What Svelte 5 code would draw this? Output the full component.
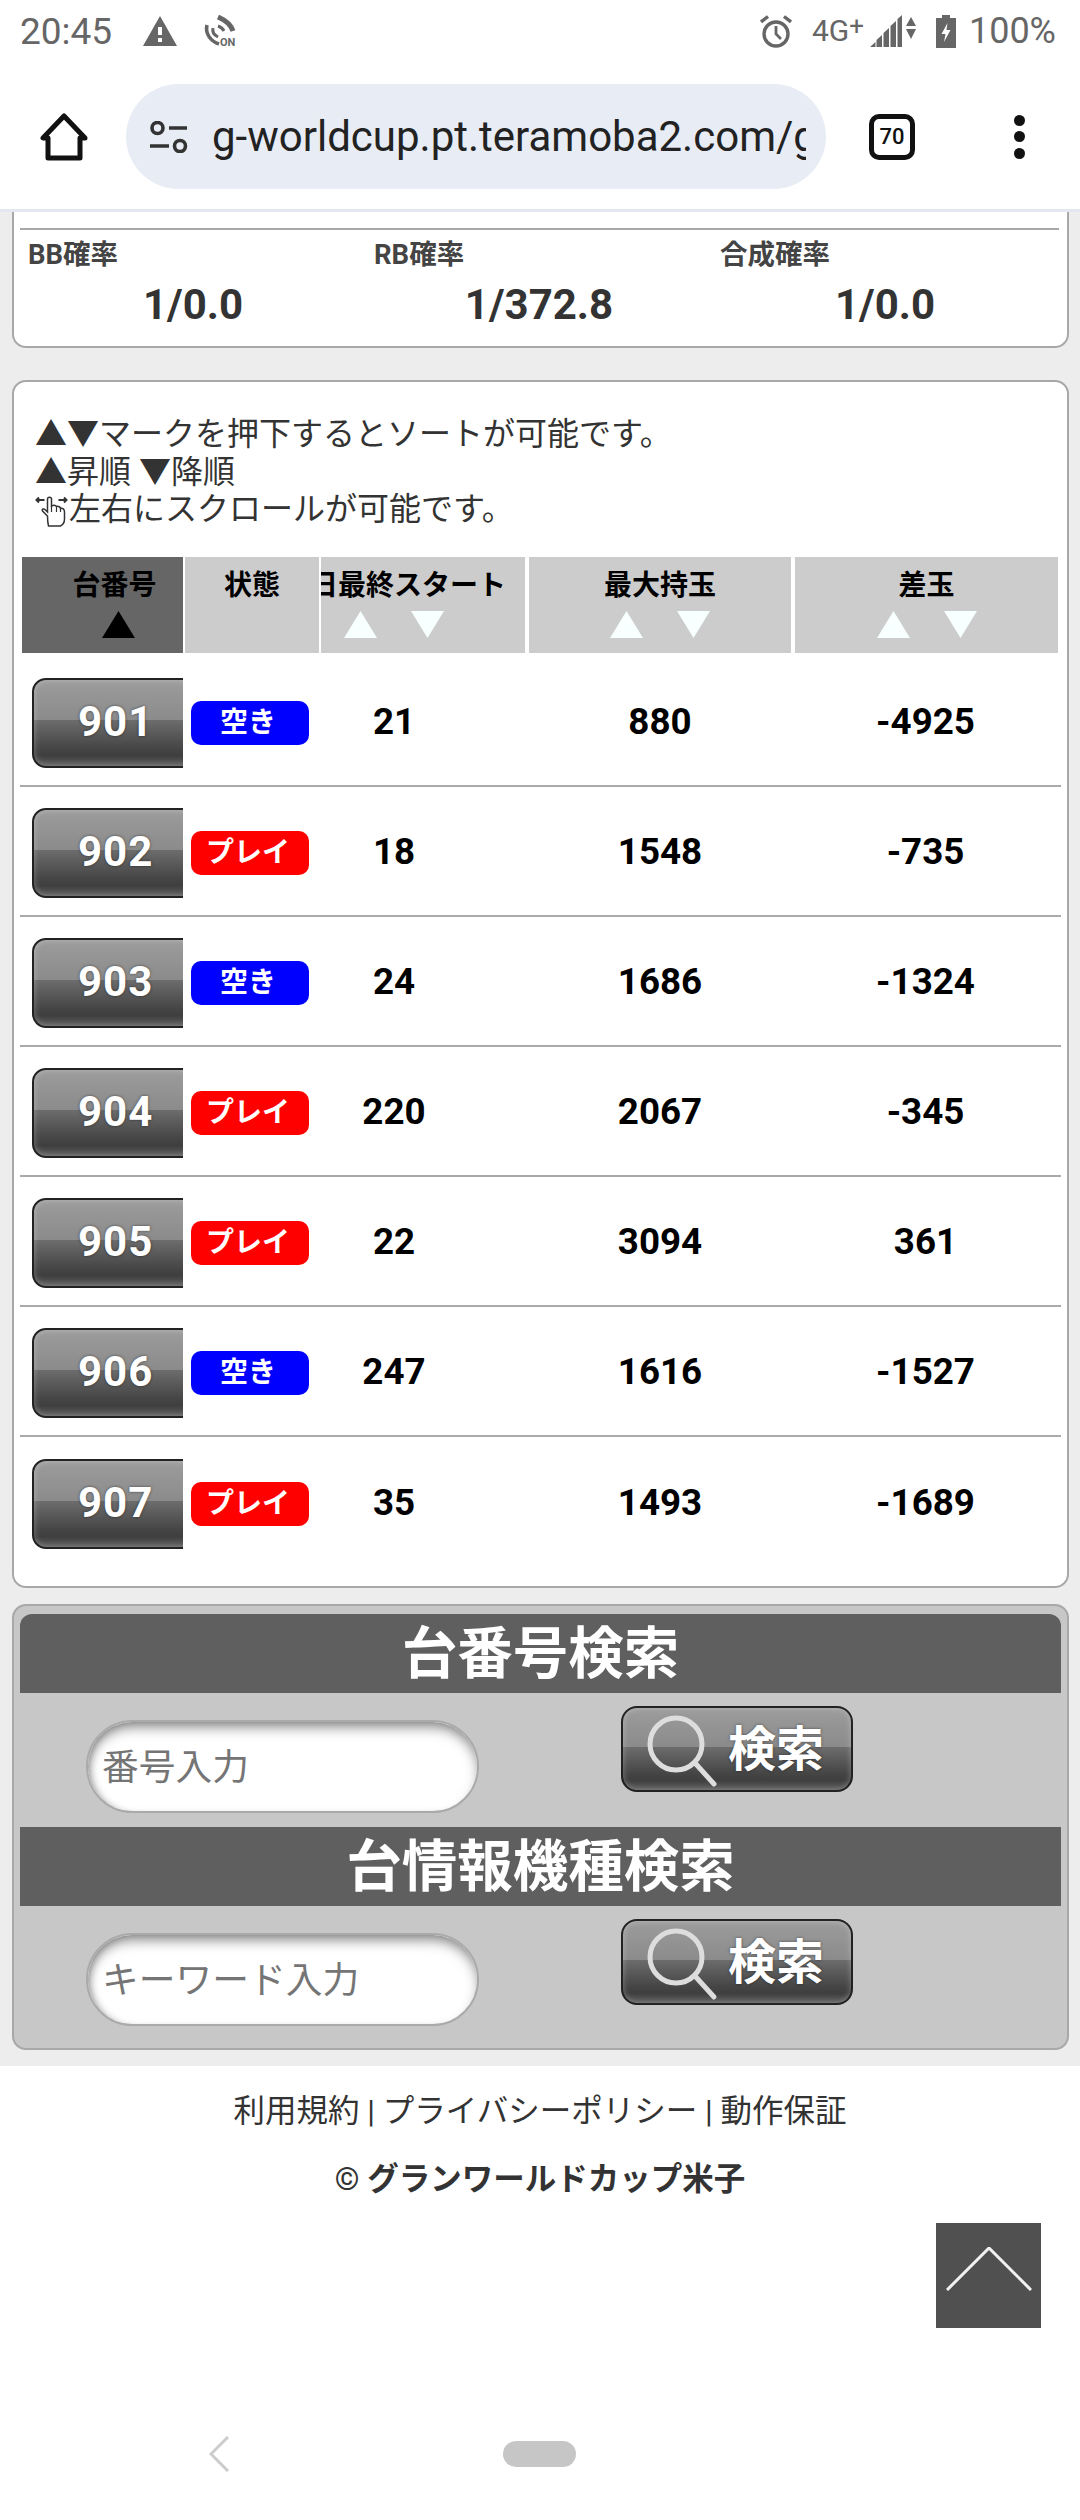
<script>
  const rows = [
    { no: 901, open: true, start: 21, max: 880, diff: -4925 },
    { no: 902, open: false, start: 18, max: 1548, diff: -735 },
    { no: 903, open: true, start: 24, max: 1686, diff: -1324 },
    { no: 904, open: false, start: 220, max: 2067, diff: -345 },
    { no: 905, open: false, start: 22, max: 3094, diff: 361 },
    { no: 906, open: true, start: 247, max: 1616, diff: -1527 },
    { no: 907, open: false, start: 35, max: 1493, diff: -1689 }
  ];
  const rates = [
    { label: 'BB確率', value: '1/0.0' },
    { label: 'RB確率', value: '1/372.8' },
    { label: '合成確率', value: '1/0.0' }
  ];
  const searches = [
    { title: '台番号検索', placeholder: '番号入力' },
    { title: '台情報機種検索', placeholder: 'キーワード入力' }
  ];
</script>

<div class="page">
  <div class="status">
    <span class="time">20:45</span>
    <svg class="warn" width="34" height="30" viewBox="0 0 34 30"><path d="M17 0 34 30H0Z" fill="#666"/><rect x="15" y="11" width="4" height="8" fill="#fff"/><rect x="15" y="22" width="4" height="4" fill="#fff"/></svg>
    <svg class="nfc" width="36" height="32" viewBox="0 0 36 32" fill="none" stroke="#666"><path d="M5 10C3 18 8 26 17 29" stroke-width="3.6"/><path d="M11 13C10 17 12 20 16 22" stroke-width="3"/><path d="M16 2C23 5 29 10 31 16" stroke-width="5"/><path d="M16 11C19 12 21 14 22 16" stroke-width="3"/><text x="18" y="31" font-size="11" font-family="Roboto" font-weight="700" fill="#666" stroke="none">ON</text></svg>
    <span class="spacer"></span>
    <svg class="alarm" width="32" height="33" viewBox="0 0 32 33" fill="none" stroke="#666" stroke-width="3.4"><circle cx="16" cy="19" r="12"/><path d="M16 11V19L21 24" stroke-width="2.8"/><path d="M1 7 8 1.5M31 7 24 1.5" stroke-width="3.4"/></svg>
    <span class="net">4G<sup>+</sup></span>
    <svg class="signal" width="46" height="32" viewBox="0 0 46 32" fill="#666"><path d="M0 32 5.500 27V32ZM6.500 25 12 20V32H6.500ZM13.500 18 19 13V32H13.500ZM20.500 11 26 6V32H20.500ZM27.500 4 32 0V32H27.500Z"/><path d="M36 11 41 2 46 11ZM36 14H46L41 24Z"/></svg>
    <svg class="battery" width="20" height="33" viewBox="0 0 20 33"><path d="M6 0H14V3H20V33H0V3H6Z" fill="#666"/><path d="M11.500 8 5.500 19H9.500L8 27 14.500 15H10.500Z" fill="#fff"/></svg>
    <span class="pct">100%</span>
  </div>

  <div class="toolbar">
    <svg class="home" width="48" height="48" viewBox="0 0 48 48" fill="none" stroke="#111" stroke-width="5" stroke-linejoin="round"><path d="M24 3 3 25H8V45H40V25H45Z"/></svg>
    <div class="url">
      <svg width="38" height="32" viewBox="0 0 38 32" fill="none" stroke="#333" stroke-width="3.600"><circle cx="7.500" cy="7" r="5.500"/><path d="M19 7H37M0 25H19"/><circle cx="30" cy="25" r="5.500"/></svg>
      <span class="url-text">g-worldcup.pt.teramoba2.com/g</span>
    </div>
    <div class="tabs">70</div>
    <div class="dots"><i></i><i></i><i></i></div>
  </div>

  <main>
    <section class="card rates">
      <div class="rates-grid">
        {#each rates as r}
          <div class="rate">
            <div class="rate-label">{r.label}</div>
            <div class="rate-value">{r.value}</div>
          </div>
        {/each}
      </div>
    </section>

    <section class="card list">
      <p class="intro">▲▼マークを押下するとソートが可能です。<br>▲昇順 ▼降順<br><svg class="hand" width="33" height="33" viewBox="0 0 32 33" fill="none" stroke="#333" stroke-width="1.500"><path d="M1 6H9M3.500 3.500 1 6 3.500 8.500M23 6H31M28.500 3.500 31 6 28.500 8.500" stroke-width="2"/><path d="M12 22 7 17C6 15 8 14 10 16L12 18V5C12 2.500 16 2.500 16 5V12C18 11 20 11 21 12.500 23 12 25 13 25 14.500 27 14 29 15 29 18V25C29 28 27 31 25 32H13C12 28 12 25 12 22Z" fill="#fff"/><path d="M16 12V18M21 12.500V18M25 14.500V18" stroke-width="1.200"/></svg>左右にスクロールが可能です。</p>

      <div class="table-head">
        <div class="th active">
          <div class="th-label shift-l">台番号</div>
          <div class="th-marks shift-a"><svg width="33" height="27" viewBox="0 0 33 27"><path d="M16.500 0 33 27H0Z" fill="#000"/></svg></div>
        </div>
        <div class="th"><div class="th-label">状態</div></div>
        <div class="th">
          <div class="th-label shift-c">当日最終スタート</div>
          <div class="th-marks shift-c">
            <svg width="33" height="27" viewBox="0 0 33 27"><path d="M16.500 0 33 27H0Z" fill="#f8ffff"/></svg>
            <svg width="33" height="27" viewBox="0 0 33 27"><path d="M0 0H33L16.500 27Z" fill="#f8ffff"/></svg>
          </div>
        </div>
        <div class="th wide">
          <div class="th-label">最大持玉</div>
          <div class="th-marks">
            <svg width="33" height="27" viewBox="0 0 33 27"><path d="M16.500 0 33 27H0Z" fill="#f8ffff"/></svg>
            <svg width="33" height="27" viewBox="0 0 33 27"><path d="M0 0H33L16.500 27Z" fill="#f8ffff"/></svg>
          </div>
        </div>
        <div class="th wide last">
          <div class="th-label">差玉</div>
          <div class="th-marks">
            <svg width="33" height="27" viewBox="0 0 33 27"><path d="M16.500 0 33 27H0Z" fill="#f8ffff"/></svg>
            <svg width="33" height="27" viewBox="0 0 33 27"><path d="M0 0H33L16.500 27Z" fill="#f8ffff"/></svg>
          </div>
        </div>
      </div>

      <div class="rows">
        {#each rows as r}
          <div class="row">
            <div class="c-no"><div class="no-btn">{r.no}</div></div>
            <div class="c-state"><span class="badge" class:open={r.open}>{r.open ? '空き' : 'プレイ'}</span></div>
            <div class="val shift-c">{r.start}</div>
            <div class="val">{r.max}</div>
            <div class="val last-val">{r.diff}</div>
          </div>
        {/each}
      </div>
    </section>

    <section class="search">
      {#each searches as s}
        <h2>{s.title}</h2>
        <div class="search-row">
          <div class="input">{s.placeholder}</div>
          <div class="go">
            <svg width="72" height="76" viewBox="0 0 72 76" fill="none" stroke="#ddd"><circle cx="29" cy="29" r="26" stroke-width="5"/><path d="M48 48 67 69" stroke-width="5" stroke-linecap="round"/></svg>
            <span>検索</span>
          </div>
        </div>
      {/each}
    </section>
  </main>

  <footer>
    <div class="links">利用規約 | プライバシーポリシー | 動作保証</div>
    <div class="copy">© グランワールドカップ米子</div>
    <div class="to-top"><svg width="86" height="44" viewBox="0 0 86 44" fill="none" stroke="#f2f2f2" stroke-width="3"><path d="M1 43 43 1 85 43"/></svg></div>
  </footer>

  <nav>
    <svg width="20" height="36" viewBox="0 0 20 36" fill="none" stroke="#ccc" stroke-width="3"><path d="M19 1 2 18 19 35"/></svg>
    <span class="pill"></span>
  </nav>
</div>

<style>
  :global(body) { margin: 0; background: #fff; }
  .page { width: 1080px; height: 2520px; overflow: hidden; font-family: Roboto, "Noto Sans CJK JP", sans-serif; color: #333; background: #fff; }

  .status { height: 60px; display: flex; align-items: center; padding: 2px 24px 0 20px; color: #666; box-sizing: border-box; }
  .time { font-size: 37px; width: 123px; }
  .nfc { margin-left: 25px; }
  .spacer { flex: 1; }
  .net { font-size: 30px; margin-left: 20px; width: 58px; line-height: 1; }
  .net sup { font-size: 26px; line-height: 0; vertical-align: 6px; }
  .signal { margin-left: 0; }
  .battery { margin-left: 20px; }
  .pct { font-size: 36px; margin-left: 13px; }

  .toolbar { height: 152px; border-bottom: 3px solid #e3e8f0; display: flex; align-items: center; padding: 4px 0 0 40px; box-sizing: border-box; }
  .url { margin-left: 38px; width: 700px; height: 105px; border-radius: 53px; background: #e8ecf5; display: flex; align-items: center; padding-left: 24px; box-sizing: border-box; overflow: hidden; }
  .url-text { font-size: 42px; color: #222; margin-left: 24px; white-space: nowrap; width: 594px; overflow: hidden; }
  .tabs { margin-left: 43px; width: 46px; height: 46px; border: 5px solid #111; border-radius: 10px; box-sizing: border-box; display: flex; align-items: center; justify-content: center; font-size: 22px; color: #111; font-weight: 500; }
  .dots { margin-left: 99px; display: flex; flex-direction: column; gap: 5.500px; }
  .dots i { width: 11px; height: 11px; border-radius: 50%; background: #111; }

  main { background: #ededed; padding: 0 11px 16px 12px; height: 1854px; box-sizing: border-box; }
  .card { background: #fff; border: 2px solid #a8a8a8; box-sizing: border-box; }
  .rates { height: 136px; border-top: none; border-radius: 0 0 14px 14px; padding: 16px 6px 0; }
  .rates-grid { display: grid; grid-template-columns: repeat(3, 346px); border-top: 2px solid #a8a8a8; padding-top: 5px; margin-right: 2px; }
  .rate { padding-left: 8px; box-sizing: border-box; }
  .rate-label { font-size: 27.500px; font-weight: 700; line-height: 40px; color: #444; }
  .rate-value { font-size: 42px; font-weight: 700; line-height: 48px; text-align: center; margin-top: 6px; padding-right: 8px; color: #333; }

  .list { margin-top: 32px; height: 1208px; border-radius: 14px; padding: 34px 6px 0; }
  .intro { margin: 0 0 0 15px; font-size: 32px; line-height: 37.500px; color: #333; height: 111px; }
  .hand { vertical-align: -7px; margin-right: 1px; }
  .table-head { margin: 30px 2px 0; display: grid; grid-template-columns: 163px 136px 208px 266px 263px; height: 96px; }
  .th { background: #ccc; margin-right: 2px; overflow: hidden; text-align: center; color: #000; }
  .th.wide { margin-right: 4px; }
  .th.last { margin-right: 0; }
  .th:nth-child(3) { margin-right: 4px; }
  .th.active { background: #666; }
  .th-label { font-size: 28px; font-weight: 700; line-height: 40px; margin-top: 9px; white-space: nowrap; }
  .th-marks { display: flex; justify-content: center; gap: 34px; margin-top: 5px; height: 27px; }
  .shift-a { transform: translateX(16px); }
  .shift-l { transform: translateX(12px); }
  .shift-c { transform: translateX(-29px); }
  .th-label.shift-c { margin-left: -30px; margin-right: -30px; }

  .rows { margin-top: 4px; }
  .row { display: grid; grid-template-columns: 165px 136px 208px 266px 263px; padding: 21px 0 17px; border-bottom: 2px solid #aaa; height: 130px; box-sizing: border-box; align-items: center; }
  .row:last-child { border-bottom: none; }
  .c-no { width: 163px; height: 90px; overflow: hidden; padding-left: 12px; box-sizing: border-box; }
  .no-btn { width: 185px; height: 90px; box-sizing: border-box; border: 2px solid #222; border-radius: 14px; background: linear-gradient(#9c9c9c, #8b8b8b 46%, #6c6c6c 47%, #454545 80%, #3f3f3f 88%, #5e5e5e); box-shadow: inset 0 0 6px rgba(255, 255, 255, .3); color: #fff; font-size: 42px; font-weight: 700; letter-spacing: 1px; line-height: 84px; padding-left: 44px; text-shadow: 0 0 3px rgba(0, 0, 0, .55); }
  .c-state { display: flex; padding-left: 6px; }
  .badge { width: 118px; height: 44px; border-radius: 10px; background: #f00; color: #fff; font-size: 28px; font-weight: 700; line-height: 43px; text-align: center; padding-right: 4px; box-sizing: border-box; }
  .badge.open { background: #00f; }
  .val { font-size: 36.750px; font-weight: 700; color: #000; text-align: center; padding-right: 4px; margin-top: -3px; }
  .val.last-val { padding-right: 2px; }

  .search { margin-top: 16px; height: 446px; background: #c7c7c7; border: 2px solid #a8a8a8; border-radius: 14px; box-sizing: border-box; padding: 8px 6px 0; }
  h2 { margin: 0; height: 79px; background: #5f5f5f; color: #fff; font-size: 55.500px; font-weight: 700; line-height: 82px; text-align: center; }
  .search h2:first-child { border-radius: 12px 12px 0 0; }
  .search-row { display: flex; height: 134px; align-items: flex-start; }
  .search-row:last-child { height: 140px; }
  .input { margin: 27px 0 0 66px; width: 393px; height: 93px; box-sizing: border-box; border: 2px solid #aaa; border-radius: 47px; background: #fff; box-shadow: inset 0 8px 14px -4px #777, inset 6px 0 9px -6px #888; color: #757575; font-size: 36.750px; line-height: 91px; padding-left: 14px; }
  .go { margin: 13px 0 0 142px; width: 232px; height: 86px; box-sizing: border-box; border: 2px solid #222; border-radius: 16px; background: linear-gradient(#9c9c9c, #8b8b8b 47%, #6c6c6c 48%, #454545 80%, #3f3f3f 88%, #5e5e5e); box-shadow: inset 0 0 6px rgba(255, 255, 255, .3); display: flex; align-items: center; padding-left: 24px; }
  .go svg { margin-top: 7px; }
  .go span { color: #fff; font-size: 48px; font-weight: 700; margin-left: 9px; text-shadow: 0 0 3px rgba(0, 0, 0, .5); margin-top: -8px; }

  footer { height: 366px; box-sizing: border-box; padding-top: 25px; overflow: hidden; }
  .links { font-size: 31.500px; line-height: 42px; text-align: center; color: #333; }
  .copy { font-size: 31.500px; font-weight: 700; line-height: 42px; text-align: center; margin-top: 26px; color: #333; }
  .to-top { width: 105px; height: 105px; background: #505050; margin: 22px 39px 0 auto; padding: 24px 10px 0; box-sizing: border-box; }
  .to-top svg { display: block; }

  nav { height: 44px; box-sizing: border-box; display: flex; align-items: center; padding-left: 209px; }
  .pill { width: 73px; height: 26px; border-radius: 13px; background: #c6c6c6; margin-left: 274px; }
</style>
